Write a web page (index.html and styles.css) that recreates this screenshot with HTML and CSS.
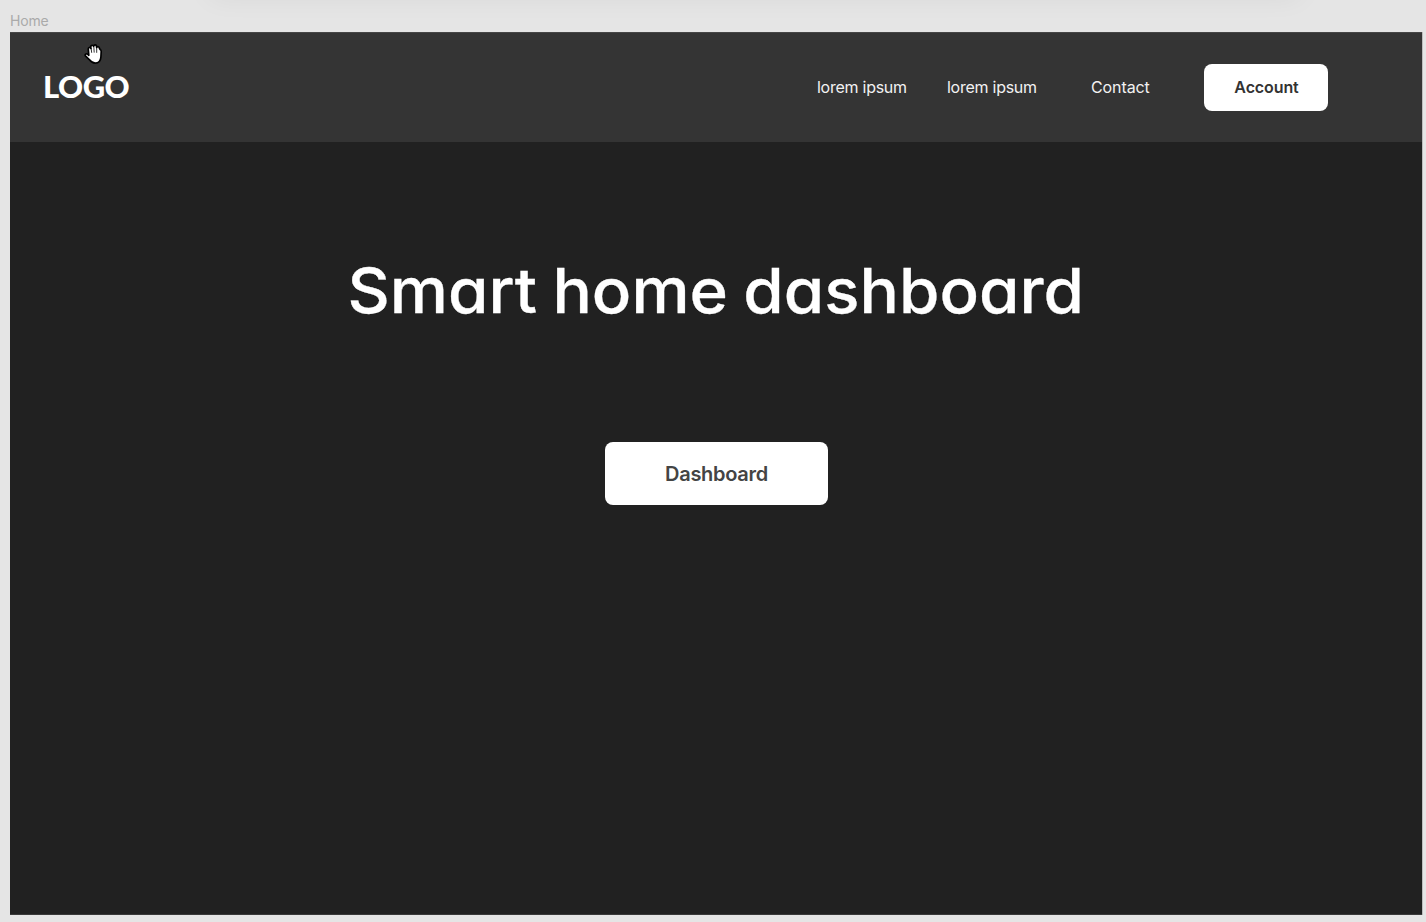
FILE: index.html
```html
<!DOCTYPE html>
<html lang="en">
<head>
<meta charset="utf-8">
<title>Home</title>
<link rel="stylesheet" href="styles.css">
</head>
<body>
<div class="canvas">
  <div class="frame-label">Home</div>
  <main class="frame">
    <header class="header">
      <div class="logo">LOGO</div>
      <nav class="nav">
        <a class="link">lorem ipsum</a>
        <a class="link second">lorem ipsum</a>
        <a class="link contact">Contact</a>
        <a class="account">Account</a>
      </nav>
    </header>
    <section class="hero">
      <h1 class="title">Smart home dashboard</h1>
      <a class="dashboard">Dashboard</a>
    </section>
  </main>
  <svg class="cursor" viewBox="0 0 20 22" width="20" height="22">
    <path d="M4.800 12.300 4.300 6.300C4.100 4.300 6.300 3.900 6.900 5.400L6.700 3.900C6.700 2 9 1.700 9.600 3.300C10 1.400 12.300 1.500 12.500 3.300L12.700 4.500C13.300 3.200 15.300 3.500 15.400 5.300L16.200 6.600C17 6.800 17.200 7.500 17.200 8.500L16.900 14C16.600 18 14.500 20.200 11.200 20.200C8.200 20.200 6.700 18.500 5.300 16.600L1.400 12.900C.6 11.300 2.200 10.200 3.500 11.200Z" fill="#fff" stroke="#000" stroke-width="1.700" stroke-linejoin="round"/>
    <path d="M7.100 5.200 7.700 9.800M9.800 3.600 10.200 9.600M12.700 4.500 12.700 9.800" fill="none" stroke="#000" stroke-width=".8"/>
  </svg>
</div>
</body>
</html>
```
FILE: styles.css
```css
* { box-sizing: border-box; }
body { margin: 0; }
.canvas {
  position: relative;
  height: 922px;
  padding: 11px 4px 0 10px;
  overflow: hidden;
  background: #e5e5e5;
  font-family: Inter, "Liberation Sans", sans-serif;
}
.canvas::before {
  content: "";
  position: absolute;
  left: 210px;
  top: -24px;
  width: 1090px;
  height: 20px;
  box-shadow: 0 0 28px rgba(0, 0, 0, .07);
}
.frame-label {
  height: 21px;
  font-size: 14px;
  line-height: 20px;
  letter-spacing: -.2px;
  color: #aaa;
}
.frame {
  height: 883px;
  background: #212121;
  border-bottom: 1px solid #3a3a3a;
  box-shadow: 1px 0 0 #bdbdbd;
}
.header {
  display: flex;
  align-items: center;
  justify-content: space-between;
  height: 110px;
  padding: 0 94px 0 33px;
  background: #343434;
  border-top: 1px solid #464646;
}
.logo {
  padding-bottom: 3px;
  font-family: Lato, Inter, sans-serif;
  font-size: 31px;
  font-weight: 900;
  line-height: 40px;
  letter-spacing: -.5px;
  color: #fff;
}
.nav { display: flex; align-items: center; color: #f2f2f2; font-size: 16px; }
.link { width: 90px; padding-bottom: 2px; letter-spacing: -.26px; white-space: nowrap; }
.second { margin-left: 40px; }
.contact { width: 60px; margin-left: 54px; letter-spacing: -.1px; }
.account {
  display: flex;
  align-items: center;
  justify-content: center;
  width: 124px;
  height: 47px;
  margin-left: 53px;
  padding: 0 0 2px 1px;
  border-radius: 8px;
  background: #fff;
  color: #333;
  font-weight: 600;
  letter-spacing: -.1px;
}
.hero { display: flex; flex-direction: column; align-items: center; padding-top: 99px; }
.title {
  margin: 0;
  height: 100px;
  font-size: 62px;
  font-weight: 500;
  font-feature-settings: "cv11";
  line-height: 100px;
  word-spacing: -2px;
  color: #fff;
  white-space: nowrap;
  transform: scaleX(1.056);
  -webkit-text-stroke: .3px #fff;
}
.dashboard {
  display: flex;
  align-items: center;
  justify-content: center;
  width: 223px;
  height: 63px;
  margin-top: 101px;
  padding-left: 1px;
  border-radius: 8px;
  background: #fff;
  color: #444;
  font-size: 20px;
  font-weight: 600;
  letter-spacing: -.3px;
}
.cursor { position: absolute; left: 84px; top: 43px; }
```
